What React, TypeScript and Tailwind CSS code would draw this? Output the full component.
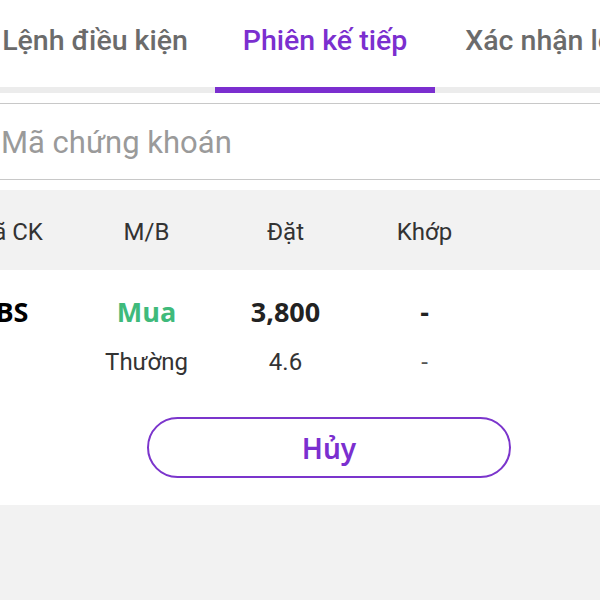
const tabs = [
  { label: "Lệnh điều kiện", width: "w-[240px]", active: false },
  { label: "Phiên kế tiếp", width: "w-[220px]", active: true },
  { label: "Xác nhận lệnh", width: "w-[240px]", active: false },
];

const Column = ({ children, className = "" }: { children: React.ReactNode; className?: string }) => (
  <div className={`w-[139px] shrink-0 text-center ${className}`}>{children}</div>
);

export default function App() {
  return (
    <div className="w-[600px] h-[600px] overflow-hidden bg-white font-['Roboto',sans-serif] flex flex-col">
      {/* tab bar */}
      <div className="flex ml-[-25px] shrink-0">
        {tabs.map((tab) => (
          <div key={tab.label} className={`${tab.width} shrink-0 flex flex-col`}>
            <div
              className={`h-[87px] pb-[4px] flex items-center justify-center whitespace-nowrap text-[28.5px] font-medium ${
                tab.active ? "text-[#7b2fcf]" : "text-[#6b6b6b]"
              }`}
            >
              {tab.label}
            </div>
            <div className={`h-[6px] ${tab.active ? "bg-[#7b2fcf]" : "bg-[#ececec]"}`} />
          </div>
        ))}
      </div>

      {/* search */}
      <div className="mt-[10px] h-[77px] shrink-0 border-y border-[#c8c8c8] flex items-center pt-[3px]">
        <span className="pl-[1px] text-[31px] text-[#9a9a9a]">Mã chứng khoán</span>
      </div>

      {/* table header */}
      <div className="mt-[10px] h-[80px] shrink-0 bg-[#f2f2f2] flex items-center ml-[-62px] pt-[3px] text-[24px] text-[#333]">
        <Column>Mã CK</Column>
        <Column>M/B</Column>
        <Column>Đặt</Column>
        <Column>Khớp</Column>
      </div>

      {/* order row */}
      <div className="h-[235px] shrink-0 flex flex-col">
        <div className="mt-[20px] h-[44px] flex items-center ml-[-62px] font-['Open_Sans',sans-serif] font-bold text-[27px]">
          <Column className="text-black pr-[6px]">SBS</Column>
          <Column className="text-[#3fba7b]">Mua</Column>
          <Column className="text-[#222]">3,800</Column>
          <Column className="text-[#222]">-</Column>
        </div>
        <div className="mt-[6px] h-[44px] flex items-center ml-[-62px] text-[24px] text-[#333]">
          <Column>{""}</Column>
          <Column>Thường</Column>
          <Column>4.6</Column>
          <Column className="text-[#555]">-</Column>
        </div>
        <button className="mt-[33px] ml-[147px] w-[364px] h-[61px] rounded-full border-2 border-[#7b35cc] text-[#7b2fcf] text-[28px] font-semibold font-['Noto_Sans',sans-serif] flex items-center justify-center">
          Hủy
        </button>
      </div>

      <div className="flex-1 bg-[#f2f2f2]" />
    </div>
  );
}
